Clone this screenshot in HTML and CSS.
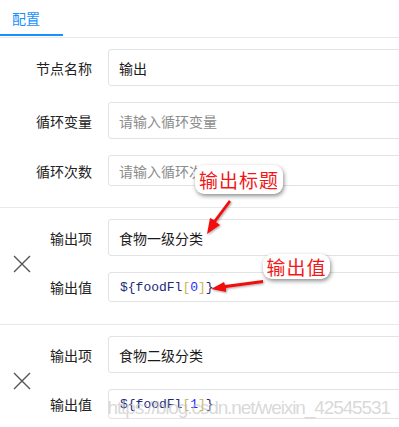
FILE: index.html
```html
<!DOCTYPE html>
<html lang="zh-CN">
<head>
  <meta charset="UTF-8">
  <meta name="viewport" content="width=device-width, initial-scale=1.0">
  <title>配置</title>
  <link rel="stylesheet" href="styles.css">
</head>
<body>
  <div class="page">
    <div class="tabs">
      <div class="tab active">配置</div>
    </div>

    <div class="section">
      <div class="rows">
        <div class="row">
          <label class="label">节点名称</label>
          <div class="field">输出</div>
        </div>
        <div class="row">
          <label class="label">循环变量</label>
          <div class="field placeholder">请输入循环变量</div>
        </div>
        <div class="row">
          <label class="label">循环次数</label>
          <div class="field short placeholder">请输入循环次数</div>
        </div>
      </div>
    </div>

    <div class="section removable">
      <div class="remove">
        <svg width="18" height="18" viewBox="0 0 18 18"><path d="M1 1L17 17M17 1L1 17" stroke="#555" stroke-width="1.4" fill="none"/></svg>
      </div>
      <div class="rows">
        <div class="row">
          <label class="label">输出项</label>
          <div class="field">食物一级分类</div>
        </div>
        <div class="row">
          <label class="label">输出值</label>
          <div class="field code"><span class="tk">${foodFl</span><span class="br">[</span><span class="num">0</span><span class="br">]</span><span class="tk">}</span></div>
        </div>
      </div>
    </div>

    <div class="section removable">
      <div class="remove">
        <svg width="18" height="18" viewBox="0 0 18 18"><path d="M1 1L17 17M17 1L1 17" stroke="#555" stroke-width="1.4" fill="none"/></svg>
      </div>
      <div class="rows">
        <div class="row">
          <label class="label">输出项</label>
          <div class="field">食物二级分类</div>
        </div>
        <div class="row">
          <label class="label">输出值</label>
          <div class="field code"><span class="tk">${foodFl</span><span class="br">[</span><span class="num">1</span><span class="br">]</span><span class="tk">}</span></div>
        </div>
      </div>
    </div>

    <!-- screenshot annotations -->
    <div class="callout callout-title">输出标题</div>
    <div class="callout callout-value">输出值</div>
    <svg class="arrows" width="399" height="427" viewBox="0 0 399 427">
      <defs>
        <filter id="sh" x="-20%" y="-20%" width="140%" height="140%">
          <feDropShadow dx="1" dy="1" stdDeviation="1" flood-color="#000" flood-opacity="0.35"/>
        </filter>
      </defs>
      <g fill="#f01010" filter="url(#sh)">
        <path d="M229 200 L231 202 L216 222 L220 225 L207 234 L210 218 L214 220 Z"/>
        <path d="M263 280 L263 283 L226 288 L226 292 L211 289 L224 282 L225 285 Z"/>
      </g>
    </svg>
    <div class="watermark">https://blog.csdn.net/weixin_42545531</div>
  </div>
</body>
</html>
```

FILE: styles.css
```css
body {
  margin: 0;
  background: #fff;
  font-family: "Noto Sans CJK SC", "Noto Sans", sans-serif;
  font-size: 14px;
  color: #262626;
  overflow: hidden;
}
.page {
  position: relative;
  width: 399px;
  height: 427px;
  overflow: hidden;
}
.tabs {
  display: flex;
  height: 37px;
  border-bottom: 1px solid #e8e8e8;
}
.tab {
  width: 63px;
  box-sizing: border-box;
  padding-left: 12px;
  line-height: 36px;
  font-size: 14px;
}
.tab.active {
  color: #1890ff;
  border-bottom: 2px solid #1890ff;
  height: 36px;
  margin-bottom: -1px;
}
.section {
  display: flex;
  align-items: center;
  padding: 11px 0 21px;
  border-bottom: 1px solid #e8e8e8;
}
.section.removable {
  padding-bottom: 22px;
}
.remove {
  width: 44px;
  display: flex;
  justify-content: center;
  margin-top: 7px;
}
.rows {
  flex: 1;
  display: flex;
  flex-direction: column;
  gap: 16px;
}
.row {
  display: flex;
  align-items: center;
  gap: 16px;
}
.label {
  width: 92px;
  text-align: right;
  color: #222;
}
.removable .label {
  width: 48px;
}
.field {
  flex: 1;
  height: 37px;
  box-sizing: border-box;
  margin-right: -20px;
  border: 1px solid #e3e3e3;
  border-radius: 3px;
  padding: 0 10px;
  display: flex;
  align-items: center;
  color: #1a1a1a;
}
.field.short {
  height: 31px;
}
.field.placeholder {
  color: #8c8c8c;
}
.field.code {
  height: 30px;
  padding-left: 11px;
  font-family: "Liberation Mono", "DejaVu Sans Mono", monospace;
  font-size: 13px;
}
.code .tk {
  color: #1c2a7a;
}
.code .br {
  color: #cdb75a;
}
.code .num {
  color: #2a2aff;
}
.callout {
  position: absolute;
  background: #fff;
  color: #f21818;
  font-size: 19px;
  border-radius: 9px;
  box-shadow: 1px 2px 4px rgba(0, 0, 0, 0.45);
  display: flex;
  align-items: center;
  justify-content: center;
  letter-spacing: 1px;
}
.callout-title {
  left: 195px;
  top: 165px;
  width: 88px;
  height: 29px;
}
.callout-value {
  left: 263px;
  top: 254px;
  width: 67px;
  height: 25px;
}
.arrows {
  position: absolute;
  left: 0;
  top: 0;
  pointer-events: none;
}
.watermark {
  position: absolute;
  right: 9px;
  top: 397px;
  font-family: "Liberation Sans", Arial, sans-serif;
  font-size: 19px;
  letter-spacing: -1.1px;
  color: rgba(195, 195, 195, 0.65);
  pointer-events: none;
}
```
